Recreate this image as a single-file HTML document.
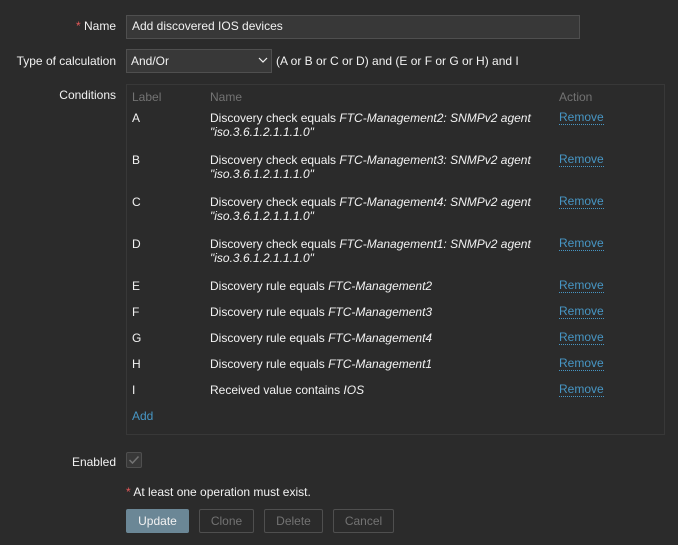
<!DOCTYPE html>
<html><head><style>
body{margin:0;background:#2b2b2b;font-family:"Liberation Sans",Arial,sans-serif;font-size:12px;color:#f2f2f2;width:678px;height:545px;overflow:hidden;position:relative}
.a{position:absolute;white-space:nowrap;line-height:14px}
.lbl{right:562px;text-align:right}
.in{position:absolute;background:#383838;border:1px solid #4f4f4f;box-sizing:border-box}
.hd{color:#737373}
.lk{color:#4796c4;border-bottom:1px dotted #4796c4;line-height:13px}
.btn{position:absolute;top:509px;height:24px;box-sizing:border-box;border:1px solid #4f4f4f;color:#737373;text-align:center;line-height:22px;border-radius:2px}
i{font-style:italic}
</style></head><body>
<div class="a lbl" style="top:19px"><span style="color:#e45959">*</span> Name</div>
<div class="in" style="left:126px;top:15px;width:454px;height:24px"></div>
<div class="a" style="left:132px;top:19px">Add discovered IOS devices</div>
<div class="a lbl" style="top:54px">Type of calculation</div>
<div class="in" style="left:126px;top:49px;width:146px;height:24px"></div>
<div class="a" style="left:131px;top:54px">And/Or</div>
<svg style="position:absolute;left:258px;top:57px" width="10" height="7"><path d="M1 1l4 4 4-4" stroke="#f2f2f2" fill="none" stroke-width="1.2"/></svg>
<div class="a" style="left:276px;top:54px">(A or B or C or D) and (E or F or G or H) and I</div>
<div class="a lbl" style="top:88px">Conditions</div>
<div style="position:absolute;left:126px;top:84px;width:539px;height:351px;border:1px solid #383838;box-sizing:border-box"></div>
<div class="a hd" style="left:132px;top:90px">Label</div>
<div class="a hd" style="left:210px;top:90px">Name</div>
<div class="a hd" style="left:559px;top:90px">Action</div>

<div class="a" style="left:132px;top:111px">A</div>
<div class="a" style="left:210px;top:111px">Discovery check equals <i>FTC-Management2: SNMPv2 agent<br>"iso.3.6.1.2.1.1.1.0"</i></div>
<div class="a lk" style="left:559px;top:111px">Remove</div>

<div class="a" style="left:132px;top:153px">B</div>
<div class="a" style="left:210px;top:153px">Discovery check equals <i>FTC-Management3: SNMPv2 agent<br>"iso.3.6.1.2.1.1.1.0"</i></div>
<div class="a lk" style="left:559px;top:153px">Remove</div>

<div class="a" style="left:132px;top:195px">C</div>
<div class="a" style="left:210px;top:195px">Discovery check equals <i>FTC-Management4: SNMPv2 agent<br>"iso.3.6.1.2.1.1.1.0"</i></div>
<div class="a lk" style="left:559px;top:195px">Remove</div>

<div class="a" style="left:132px;top:237px">D</div>
<div class="a" style="left:210px;top:237px">Discovery check equals <i>FTC-Management1: SNMPv2 agent<br>"iso.3.6.1.2.1.1.1.0"</i></div>
<div class="a lk" style="left:559px;top:237px">Remove</div>

<div class="a" style="left:132px;top:279px">E</div>
<div class="a" style="left:210px;top:279px">Discovery rule equals <i>FTC-Management2</i></div>
<div class="a lk" style="left:559px;top:279px">Remove</div>
<div class="a" style="left:132px;top:305px">F</div>
<div class="a" style="left:210px;top:305px">Discovery rule equals <i>FTC-Management3</i></div>
<div class="a lk" style="left:559px;top:305px">Remove</div>
<div class="a" style="left:132px;top:331px">G</div>
<div class="a" style="left:210px;top:331px">Discovery rule equals <i>FTC-Management4</i></div>
<div class="a lk" style="left:559px;top:331px">Remove</div>
<div class="a" style="left:132px;top:357px">H</div>
<div class="a" style="left:210px;top:357px">Discovery rule equals <i>FTC-Management1</i></div>
<div class="a lk" style="left:559px;top:357px">Remove</div>
<div class="a" style="left:132px;top:383px">I</div>
<div class="a" style="left:210px;top:383px">Received value contains <i>IOS</i></div>
<div class="a lk" style="left:559px;top:383px">Remove</div>
<div class="a" style="left:132px;top:409px;color:#4796c4">Add</div>

<div class="a lbl" style="top:455px">Enabled</div>
<div class="in" style="left:126px;top:452px;width:16px;height:16px;border-radius:2px"></div>
<svg style="position:absolute;left:128px;top:455px" width="12" height="10"><path d="M1.5 5l3 3 6-6.5" stroke="#737373" fill="none" stroke-width="1.5"/></svg>
<div class="a" style="left:126px;top:485px"><span style="color:#e45959">*</span> At least one operation must exist.</div>
<div class="btn" style="left:126px;width:63px;background:#6b8796;border-color:#6b8796;color:#f2f2f2">Update</div>
<div class="btn" style="left:199px;width:55px">Clone</div>
<div class="btn" style="left:264px;width:59px">Delete</div>
<div class="btn" style="left:333px;width:61px">Cancel</div>
</body></html>
